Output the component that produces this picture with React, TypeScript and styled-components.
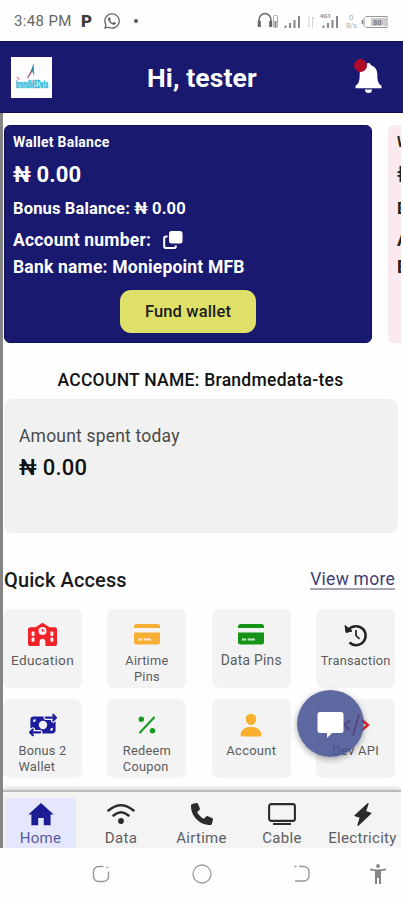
import React from "react";
import styled, { createGlobalStyle } from "styled-components";
import { FaSchool, FaMoneyBillTransfer, FaPhone } from "react-icons/fa6";
import { IoPerson } from "react-icons/io5";
import { FaWhatsapp } from "react-icons/fa";

const Global = createGlobalStyle`
  * { box-sizing: border-box; }
  body { margin: 0; background: #fff; font-family: Roboto, "Liberation Sans", sans-serif; }
  svg { display: block; flex: none; }
`;

const Screen = styled.div`
  width: 403px;
  height: 900px;
  display: flex;
  flex-direction: column;
  overflow: hidden;
  background: #fefefe;
`;

const StatusBar = styled.div`
  height: 41px;
  flex: none;
  display: flex;
  align-items: center;
  justify-content: space-between;
  padding: 1px 14px 0 14px;
  color: #666;
`;

const StatusGroup = styled.div`
  display: flex;
  align-items: center;
`;

const Clock = styled.span`
  font-size: 15px;
  letter-spacing: 0.35px;
  width: 67px;
  white-space: nowrap;
`;

const AppMark = styled.span`
  font-size: 17px;
  font-weight: 900;
  color: #3c3c3c;
  width: 22px;
`;

const Dot = styled.i`
  width: 4px;
  height: 4px;
  border-radius: 50%;
  background: #555;
  margin-left: 13px;
`;

const Header = styled.header`
  height: 72px;
  flex: none;
  background: #19196f;
  border-top: 1px solid #10104f;
  border-bottom: 1px solid #10104f;
  display: grid;
  grid-template-columns: 41px 1fr 30px;
  align-items: center;
  padding: 0 20px 0 11px;
`;

const Logo = styled.div`
  width: 41px;
  height: 41px;
  background: #fdfdfe;
`;

const Greeting = styled.h1`
  margin: 2px 0 0 95px;
  font-size: 26.5px;
  line-height: 32px;
  font-weight: 700;
  letter-spacing: 0.1px;
  color: #fff;
`;

const Bell = styled.div`
  position: relative;
  width: 30px;
  height: 37px;
  padding: 4px 0 0 2px;
  color: #fff;
`;

const BellBadge = styled.i`
  position: absolute;
  left: 1px;
  top: 0;
  width: 13px;
  height: 13px;
  border-radius: 50%;
  background: #b00a2b;
`;

const Body = styled.main`
  position: relative;
  height: 735px;
  flex: none;
  width: 401px;
  border-left: 3px solid #858585;
  display: flex;
  flex-direction: column;
  overflow: hidden;
`;

const Carousel = styled.section`
  display: flex;
  gap: 16px;
  padding: 12px 0 0 1px;
  overflow: hidden;
  flex: none;
`;

const WalletCard = styled.article<{ $alt?: boolean }>`
  width: 368px;
  height: 218px;
  flex: none;
  border-radius: 6px;
  padding: 7px 8px;
  background: ${(p) => (p.$alt ? "#fbe9f0" : "#19196f")};
  border: 1px solid ${(p) => (p.$alt ? "#fbe9f0" : "#10105a")};
  color: ${(p) => (p.$alt ? "#222" : "#fff")};
  display: flex;
  flex-direction: column;
`;

const Line = styled.div<{ $size: number; $height: number; $track?: number }>`
  display: flex;
  align-items: center;
  gap: 12px;
  font-weight: 700;
  white-space: nowrap;
  flex: none;
  font-size: ${(p) => p.$size}px;
  height: ${(p) => p.$height}px;
  letter-spacing: ${(p) => p.$track ?? 0}px;
`;

const FundButton = styled.button`
  width: 136px;
  height: 43px;
  margin: 19px 0 0;
  align-self: center;
  border: 0;
  border-radius: 11px;
  background: #dfe068;
  color: #1c1c1c;
  font: 500 16.5px Roboto, sans-serif;
  letter-spacing: 0.15px;
`;

const AccountName = styled.div`
  height: 56px;
  padding: 17px 3px 0 0;
  line-height: 40px;
  text-align: center;
  font-size: 17.500px;
  font-weight: 500;
  letter-spacing: 0.27px;
  color: #111;
  white-space: nowrap;
`;

const Spent = styled.section`
  width: 394px;
  height: 134px;
  margin-left: 1px;
  flex: none;
  border-radius: 8px;
  background: #f1f1f1;
  padding: 24px 15px;
`;

const SpentLabel = styled.div`
  font-size: 17.500px;
  line-height: 27px;
  letter-spacing: 0.2px;
  color: #4a4a4a;
`;

const SpentAmount = styled.div`
  font-size: 22px;
  line-height: 36px;
  font-weight: 500;
  color: #111;
  letter-spacing: 0.25px;
`;

const SectionHead = styled.div`
  display: flex;
  justify-content: space-between;
  align-items: center;
  height: 76px;
  padding: 18px 6px 0 1px;
`;

const SectionTitle = styled.h2`
  margin: 0;
  font-size: 20px;
  font-weight: 500;
  letter-spacing: 0.12px;
  color: #1a1a1a;
`;

const More = styled.a`
  font-size: 17.500px;
  line-height: 18px;
  letter-spacing: 0.25px;
  color: #3e3e79;
  border-bottom: 2px solid #a4a4b4;
`;

const Tiles = styled.section`
  display: grid;
  grid-template-columns: repeat(4, 79px);
  column-gap: 25.400px;
  row-gap: 11px;
  grid-auto-rows: 79px;
`;

const Tile = styled.div<{ $color: string }>`
  border-radius: 7px;
  background: #f3f3f3;
  display: flex;
  flex-direction: column;
  align-items: center;
  padding: 12px 0 0;
  color: ${(p) => p.$color};
`;

const TileIcon = styled.div`
  height: 27px;
  display: flex;
  align-items: center;
`;

const TileLabel = styled.div<{ $size: number; $left?: boolean }>`
  margin-top: 5px;
  font-size: ${(p) => p.$size}px;
  line-height: 15.5px;
  letter-spacing: 0.25px;
  color: #5c5c5c;
  text-align: ${(p) => (p.$left ? "left" : "center")};
  white-space: pre;
`;

const Chat = styled.button`
  position: absolute;
  left: 294px;
  top: 577px;
  width: 67px;
  height: 67px;
  border: 0;
  padding: 2px 0 0;
  border-radius: 50%;
  background: rgba(68, 80, 145, 0.86);
  box-shadow: 0 2px 6px rgba(0, 0, 0, 0.35);
  display: flex;
  align-items: center;
  justify-content: center;
`;

const Tabs = styled.nav`
  margin-top: auto;
  height: 58px;
  flex: none;
  border-top: 2px solid #bcbcbc;
  box-shadow: 0 -2px 5px rgba(0, 0, 0, 0.16);
  background: #f4f4f5;
  display: grid;
  grid-template-columns: 71px 90px 71px 90px 71px;
  padding: 6px 0 0 2px;
`;

const Tab = styled.div<{ $active?: boolean }>`
  display: flex;
  flex-direction: column;
  align-items: center;
  padding-top: 4px;
  border-radius: 3px 3px 0 0;
  background: ${(p) => (p.$active ? "#e5e8fc" : "transparent")};
  color: ${(p) => (p.$active ? "#1c1c95" : "#2b2b2b")};
`;

const TabIcon = styled.div`
  height: 24px;
  margin-bottom: 3px;
  display: flex;
  align-items: center;
`;

const TabLabel = styled.span<{ $active?: boolean }>`
  font-size: 15px;
  line-height: 19px;
  letter-spacing: 0.3px;
  color: ${(p) => (p.$active ? "#5a5aa6" : "#5e5e5e")};
`;

const SystemNav = styled.footer`
  flex: 1;
  display: grid;
  grid-template-columns: 100px 101px 99px 54px;
  align-items: center;
  justify-items: center;
  padding: 0 0 1px 51px;
`;

const CardGlyph = () => (
  <svg width="26" height="21" viewBox="0 0 26 21">
    <path d="M2.500 0h21A2.500 2.500 0 0 1 26 2.500V4H0V2.500A2.500 2.500 0 0 1 2.500 0ZM0 8.500h26V18a2.500 2.500 0 0 1-2.500 2.500h-21A2.500 2.500 0 0 1 0 18Z" fill="currentColor" />
    <path d="M4 15.500h4M9.500 15.500H17" stroke="#fff" strokeOpacity=".75" strokeWidth="1.800" />
  </svg>
);

const PercentGlyph = () => (
  <svg width="18" height="18" viewBox="0 0 18 18" fill="currentColor">
    <circle cx="3.300" cy="3.300" r="2.700" />
    <circle cx="14.500" cy="14.700" r="2.700" />
    <path d="M2 16.500 16 1.500" stroke="currentColor" strokeWidth="2.100" strokeLinecap="round" />
  </svg>
);

const CodeGlyph = () => (
  <svg width="28" height="22" viewBox="0 0 28 22" fill="none" stroke="currentColor" strokeWidth="2.300">
    <path d="m8 6-6 5 6 5M17 .5 11 21.500M20 6l6 5-6 5" />
  </svg>
);

const HistoryGlyph = () => (
  <svg width="24" height="24" viewBox="0 0 24 24" fill="none" stroke="currentColor">
    <path d="M4.500 7A9.500 9.500 0 1 1 5.500 19.500" strokeWidth="2.500" />
    <path d="M1 2.500 2 9.500 8 8Z" fill="currentColor" strokeWidth="1" />
    <path d="M12 7v5.500l3.500 3.500" strokeWidth="1.700" />
  </svg>
);

const CopyGlyph = () => (
  <svg width="20" height="20" viewBox="0 0 20 20">
    <rect x="6" y="1" width="13.500" height="12.500" rx="2.500" fill="currentColor" />
    <path d="M4.500 6.500H3A1.800 1.800 0 0 0 1.200 8.300v8A1.800 1.800 0 0 0 3 18.100h8a1.800 1.800 0 0 0 1.800-1.800V15.500" fill="none" stroke="currentColor" strokeWidth="2" />
  </svg>
);

const BellGlyph = () => (
  <svg width="27" height="31" viewBox="0 0 27 31" fill="currentColor">
    <path d="M13.500 0c1.500 0 2.300 1 2.400 2.300C20 3.300 22.300 7 22.300 11.500c0 7 1.200 9.300 4.200 11.300v2.400H.5v-2.400c3-2 4.200-4.300 4.200-11.300C4.700 7 7 3.300 11.100 2.300 11.200 1 12 0 13.500 0ZM10 26.500h7a3.500 3.500 0 0 1-7 0Z" />
  </svg>
);

const HomeGlyph = () => (
  <svg width="26" height="23" viewBox="0 0 26 23" fill="currentColor">
    <path d="M13 0 25.700 11.600H22.600V22.300H15.800V15H10.200V22.300H3.400V11.600H.3Z" />
  </svg>
);

const FlashGlyph = () => (
  <svg width="18" height="23" viewBox="0 0 18 23" fill="currentColor">
    <path d="M14 .8 1.200 12.500l5.300 1.800L4 22.200 16.800 10.300l-5.500-1.800Z" stroke="currentColor" strokeWidth="1.400" strokeLinejoin="round" />
  </svg>
);

const WifiGlyph = () => (
  <svg width="28" height="22" viewBox="0 0 28 22" fill="none" stroke="currentColor" strokeWidth="2.500" strokeLinecap="round">
    <path d="M1.500 7.500q12.500-10.500 25 0M6.500 12.500q7.500-6.500 15 0" />
    <circle cx="14" cy="18" r="2.900" fill="currentColor" stroke="none" />
  </svg>
);

const ScreenGlyph = () => (
  <svg width="28" height="22" viewBox="0 0 28 22" fill="none" stroke="currentColor">
    <rect x="1.100" y="1.100" width="25.800" height="16.800" rx="2.200" strokeWidth="2.100" />
    <path d="M5 21h18" strokeWidth="2" />
  </svg>
);

const LogoArt = () => (
  <svg width="41" height="41" viewBox="0 0 41 41">
    <path d="m18.500 18 4-12 .8 13-2.300-5-2.500 5Z" fill="#2f8db5" />
    <path d="m16.500 21 4.500-7.500" stroke="#a8506a" strokeWidth="1.300" />
    <path d="m6 20 2.500 2.500" stroke="#ef8a94" strokeWidth="1.500" />
    <text x="5" y="31" fontSize="10" fontWeight="700" textLength="32" lengthAdjust="spacingAndGlyphs" fill="#37b9d8" stroke="#37b9d8" strokeWidth="0.400">brandMEData</text>
  </svg>
);

const StatusIcons = () => (
  <svg width="133" height="18" viewBox="0 0 133 18" fill="none" stroke="#666">
    <path d="M3 11V8a6 6.500 0 0 1 12 0v3" strokeWidth="1.500" />
    <path d="M3.300 9v6M14.700 9v6" strokeWidth="3" />
    <rect x="17.500" y="3.500" width="4" height="12" rx="1" stroke="#aaa" />
    <path d="M19.500 9v6" strokeWidth="2" stroke="#888" />
    <path d="M29.500 13.500V16M34 11v5M38.500 8v8M43 4v12" strokeWidth="2" stroke="#888" />
    <path d="M53 4v11l-2-2M56.500 16V5l2 2" stroke="#d4d4d4" />
    <text x="64" y="6" fontSize="6" fontWeight="700" fill="#888" stroke="none">4G1</text>
    <path d="M67.500 13.500V16M72 11v5M76.500 8v8M81 4v12" strokeWidth="2" stroke="#888" />
    <text x="93" y="8" fontSize="8" fill="#aaa" stroke="none">0</text>
    <text x="90" y="16" fontSize="7" fill="#aaa" stroke="none">B/s</text>
    <path d="M110 4.500h21v11h-21l-2-2V6.500Z" stroke="#999" />
    <rect x="115" y="6" width="15" height="8" fill="#ccc" stroke="none" />
    <path d="M106.500 8v4" strokeWidth="1.500" stroke="#888" />
    <text x="117" y="13" fontSize="7.500" fontWeight="700" fill="#777" stroke="none">80</text>
  </svg>
);

const RecentGlyph = () => (
  <svg width="18" height="18" viewBox="0 0 18 18" fill="none" stroke="#999" strokeWidth="1.400">
    <path d="M11.500 1.500H6.500A5 5 0 0 0 1.500 6.500v5a5 5 0 0 0 5 5h5a5 5 0 0 0 5-5V6.500" />
    <path d="m14.500 2 1.500 1" />
  </svg>
);
const CircleGlyph = () => (
  <svg width="20" height="20" viewBox="0 0 20 20" fill="none" stroke="#999" strokeWidth="1.300"><circle cx="10" cy="10" r="9" /></svg>
);
const BackGlyph = () => (
  <svg width="18" height="18" viewBox="0 0 18 18" fill="none" stroke="#999" strokeWidth="1.400">
    <path d="M1.500 1.500h2M6 1.500h5a5 5 0 0 1 5 5V11a5 5 0 0 1-5 5H2" />
  </svg>
);
const AccessGlyph = () => (
  <svg width="18" height="20" viewBox="0 0 18 20" fill="#858585">
    <circle cx="9" cy="2" r="1.900" />
    <path d="M1 4.500q8 2 16 0v1.700l-5 1V20H10v-6H8v6H6V7.200l-5-1Z" />
  </svg>
);

const services = [
  { label: "Education", color: "#f32228", size: 13.7, icon: <FaSchool size={29} /> },
  { label: "Airtime\nPins", color: "#f6ae35", size: 12.8, icon: <CardGlyph /> },
  { label: "Data Pins", color: "#159418", size: 13.8, icon: <CardGlyph /> },
  { label: "Transaction", color: "#222", size: 12.8, icon: <HistoryGlyph /> },
  { label: "Bonus 2\nWallet", color: "#1c1c9c", size: 12.8, left: true, icon: <FaMoneyBillTransfer size={28} /> },
  { label: "Redeem\nCoupon", color: "#169a22", size: 12.8, left: true, icon: <PercentGlyph /> },
  { label: "Account", color: "#f9b02f", size: 13, icon: <IoPerson size={26} /> },
  { label: "Dev API", color: "#ee1d2b", size: 13, icon: <CodeGlyph /> },
];

const tabs = [
  { label: "Home", icon: <HomeGlyph />, active: true },
  { label: "Data", icon: <WifiGlyph /> },
  { label: "Airtime", icon: <FaPhone size={22} /> },
  { label: "Cable", icon: <ScreenGlyph /> },
  { label: "Electricity", icon: <FlashGlyph /> },
];

const Wallet = ({ alt = false }: { alt?: boolean }) => (
  <WalletCard $alt={alt}>
    <Line $size={14} $height={17} $track={0.25}>Wallet Balance</Line>
    <Line $size={22} $height={48} $track={0.1}>₦ 0.00</Line>
    <Line $size={16.5} $height={20} $track={0.15}>Bonus Balance: ₦ 0.00</Line>
    <Line $size={17.5} $height={44} $track={0.2}>Account number: {!alt && <CopyGlyph />}</Line>
    <Line $size={17.5} $height={9} $track={0.2}>Bank name: Moniepoint MFB</Line>
    {!alt && <FundButton>Fund wallet</FundButton>}
  </WalletCard>
);

export default function App() {
  return (
    <>
      <Global />
      <Screen>
        <StatusBar>
          <StatusGroup>
            <Clock>3:48 PM</Clock>
            <AppMark>P</AppMark>
            <FaWhatsapp size={18} />
            <Dot />
          </StatusGroup>
          <StatusIcons />
        </StatusBar>
        <Header>
          <Logo><LogoArt /></Logo>
          <Greeting>Hi, tester</Greeting>
          <Bell>
            <BellGlyph />
            <BellBadge />
          </Bell>
        </Header>
        <Body>
          <Carousel>
            <Wallet />
            <Wallet alt />
          </Carousel>
          <AccountName>ACCOUNT NAME: Brandmedata-tes</AccountName>
          <Spent>
            <SpentLabel>Amount spent today</SpentLabel>
            <SpentAmount>₦ 0.00</SpentAmount>
          </Spent>
          <SectionHead>
            <SectionTitle>Quick Access</SectionTitle>
            <More>View more</More>
          </SectionHead>
          <Tiles>
            {services.map((s) => (
              <Tile key={s.label} $color={s.color}>
                <TileIcon>{s.icon}</TileIcon>
                <TileLabel $size={s.size} $left={s.left}>{s.label}</TileLabel>
              </Tile>
            ))}
          </Tiles>
          <Tabs>
            {tabs.map((t) => (
              <Tab key={t.label} $active={t.active}>
                <TabIcon>{t.icon}</TabIcon>
                <TabLabel $active={t.active}>{t.label}</TabLabel>
              </Tab>
            ))}
          </Tabs>
          <Chat>
            <svg width="27" height="27" viewBox="0 0 27 27" fill="#fff">
              <path d="M3 1h21a2.500 2.500 0 0 1 2.500 2.500v16A2.500 2.500 0 0 1 24 22h-9l-5 5v-5H3a2.500 2.500 0 0 1-2.500-2.500v-16A2.500 2.500 0 0 1 3 1Z" />
            </svg>
          </Chat>
        </Body>
        <SystemNav>
          <RecentGlyph />
          <CircleGlyph />
          <BackGlyph />
          <AccessGlyph />
        </SystemNav>
      </Screen>
    </>
  );
}
